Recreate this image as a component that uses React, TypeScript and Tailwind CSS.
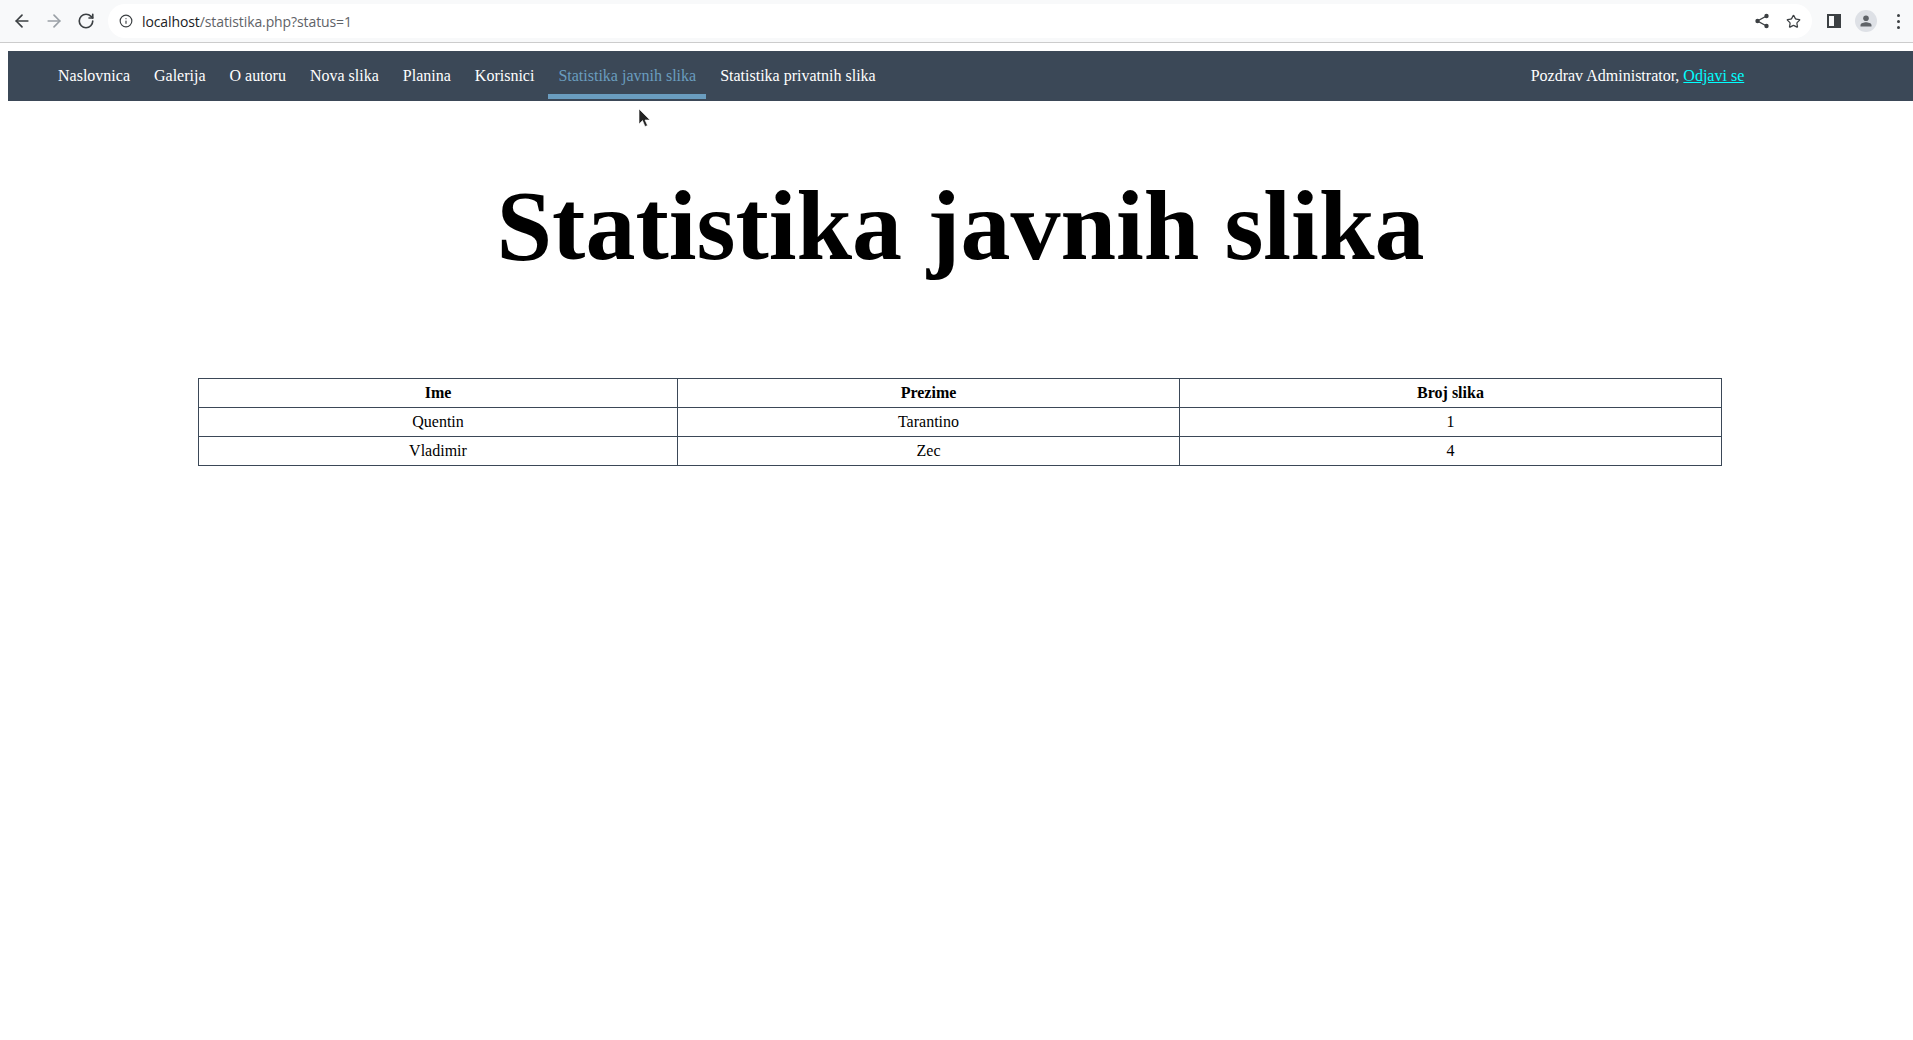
import { ArrowLeft, ArrowRight, RotateCw, Info, Star } from 'lucide-react';

const links = ['Naslovnica', 'Galerija', 'O autoru', 'Nova slika', 'Planina', 'Korisnici', 'Statistika javnih slika', 'Statistika privatnih slika'];

const rows = [
  ['Quentin', 'Tarantino', '1'],
  ['Vladimir', 'Zec', '4'],
];

function BrowserBar() {
  return (
    <div className="h-[43px] bg-[#f8f9fa] border-b border-[#cccccc] flex items-center pl-[12px] pr-[13px] font-['Roboto',sans-serif]">
      <ArrowLeft size={20} strokeWidth={2} className="text-[#3c4043]" />
      <ArrowRight size={20} strokeWidth={2} className="text-[#9aa0a6] ml-[12px]" />
      <RotateCw size={18} strokeWidth={2.2} className="text-[#3c4043] ml-[13px]" />
      <div className="ml-[13px] flex-1 h-[34px] bg-white rounded-full flex items-center pl-[11px] pr-[11px]">
        <Info size={14} className="text-[#3c4043]" />
        <span className="ml-[9px] text-[14px] text-[#5f6368] font-['Open_Sans',sans-serif] tracking-[-0.1px]">
          <span className="text-[#202124]">localhost</span>/statistika.php?status=1
        </span>
        <div className="ml-auto flex items-center gap-[16px]">
          <svg width="16" height="16" viewBox="0 0 16 16" className="text-[#3c4043]">
            <path d="M12.5 3 3.5 8l9 5" fill="none" stroke="currentColor" strokeWidth="1.4" />
            <circle cx="12.5" cy="3" r="2.2" fill="currentColor" />
            <circle cx="3.5" cy="8" r="2.2" fill="currentColor" />
            <circle cx="12.5" cy="13" r="2.2" fill="currentColor" />
          </svg>
          <Star size={15} strokeWidth={2} className="text-[#3c4043]" />
        </div>
      </div>
      <div className="ml-[15px] w-[14px] h-[14px] border-2 border-[#3c4043] flex justify-end">
        <div className="w-[5px] h-full bg-[#3c4043]" />
      </div>
      <div className="ml-[14px] w-[22px] h-[22px] rounded-full bg-[#dee1e6] flex items-center justify-center">
        <svg width="14" height="14" viewBox="0 0 14 14" className="text-[#5f6368]">
          <circle cx="7" cy="4.2" r="2.8" fill="currentColor" />
          <path d="M1.5 12.5V11c0-1.8 3.6-2.8 5.5-2.8s5.500 1 5.500 2.800v1.500z" fill="currentColor" />
        </svg>
      </div>
      <div className="ml-[20px] flex flex-col gap-[3px]">
        <div className="w-[3px] h-[3px] rounded-full bg-[#3c4043]" />
        <div className="w-[3px] h-[3px] rounded-full bg-[#3c4043]" />
        <div className="w-[3px] h-[3px] rounded-full bg-[#3c4043]" />
      </div>
    </div>
  );
}

export default function App() {
  return (
    <div className="relative min-h-[1040px] bg-white text-black font-['Liberation_Serif',serif] text-[16px] overflow-hidden">
      <BrowserBar />
      <nav className="ml-[8px] mt-[8px] h-[50px] bg-[#3b4857] flex items-stretch pl-[40px] text-white">
        <div className="flex items-stretch gap-[4px]">
          {links.map((l, i) => (
            <a
              key={l}
              className={i === 6
                ? 'flex items-center px-[10px] text-[#6a9dbf] border-b-[5px] border-[#6a9dbf] mb-[2px] pt-[7px]'
                : 'flex items-center px-[10px] text-white'}
            >
              {l}
            </a>
          ))}
        </div>
        <div className="ml-[645px] flex items-center">
          Pozdrav Administrator,&nbsp;<a className="text-[#00ffff] underline">Odjavi se</a>
        </div>
      </nav>
      <h1 className="text-[100px] font-bold text-center leading-[110px] mt-[70px] ml-[8px]">Statistika javnih slika</h1>
      <table className="mt-[97px] ml-[198px] w-[1524px] border-collapse text-center">
        <thead>
          <tr className="h-[29px]">
            <th className="w-[479px] border border-[#3b4857] font-bold">Ime</th>
            <th className="w-[502px] border border-[#3b4857] font-bold">Prezime</th>
            <th className="border border-[#3b4857] font-bold">Broj slika</th>
          </tr>
        </thead>
        <tbody>
          {rows.map((r) => (
            <tr key={r[0]} className="h-[29px]">
              {r.map((c) => (
                <td key={c} className="border border-[#3b4857]">{c}</td>
              ))}
            </tr>
          ))}
        </tbody>
      </table>
      {/* mouse cursor from the capture */}
      <svg width="14" height="20" viewBox="0 0 14 20" className="absolute left-[638px] top-[108px]">
        <path d="M1 1v15l3.500-3.500 2.500 6 2.500-1-2.500-5.500h5z" fill="#222" stroke="#fff" strokeWidth="0.6" />
      </svg>
    </div>
  );
}
